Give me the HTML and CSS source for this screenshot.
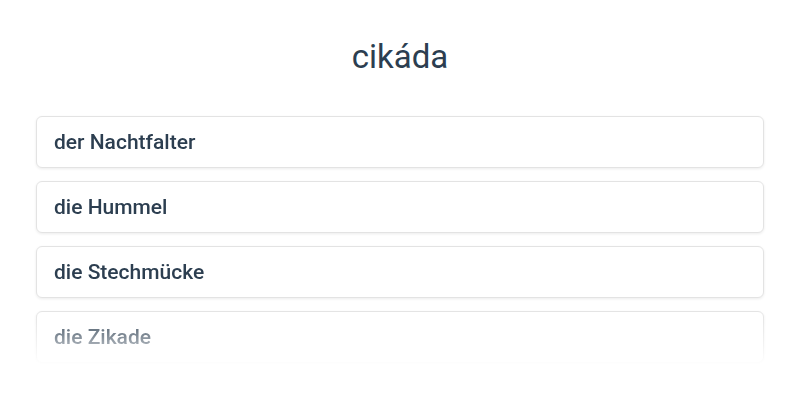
FILE: index.html
```html
<!DOCTYPE html>
<html lang="de">
<head>
<meta charset="utf-8">
<title>cikáda</title>
<link rel="stylesheet" href="styles.css">
</head>
<body>
<main class="quiz">
  <h1 class="word">cikáda</h1>
  <div class="options">
    <div class="option">der Nachtfalter</div>
    <div class="option">die Hummel</div>
    <div class="option">die Stechmücke</div>
    <div class="option">die Zikade</div>
  </div>
</main>
</body>
</html>
```

FILE: styles.css
```css
html, body {
  margin: 0;
  padding: 0;
  background: #ffffff;
}
body {
  font-family: Roboto, "Noto Sans", sans-serif;
  color: #2c3e50;
}
.quiz {
  width: 728px;
  margin: 0 auto;
  padding-top: 36px;
}
.word {
  margin: 0 0 38px;
  text-align: center;
  font-size: 33px;
  font-weight: 400;
  line-height: 42px;
  color: #2c3e50;
}
.options {
  display: flex;
  flex-direction: column;
  gap: 13px;
  height: 254px;
  overflow: hidden;
  padding: 2px 2px 0;
  margin: -2px -2px 0;
  -webkit-mask-image: linear-gradient(to bottom, #000 196px, rgba(0,0,0,0.6) 222px, transparent 252px);
  mask-image: linear-gradient(to bottom, #000 196px, rgba(0,0,0,0.6) 222px, transparent 252px);
}
.option {
  flex: 0 0 auto;
  box-sizing: border-box;
  height: 52px;
  display: flex;
  align-items: center;
  padding: 0 17px;
  border: 1px solid #e3e3e3;
  border-radius: 6px;
  background: #fff;
  box-shadow: 0 1px 3px rgba(0, 0, 0, 0.08);
  font-size: 21px;
  font-weight: 500;
  color: #2c3e50;
}
```
